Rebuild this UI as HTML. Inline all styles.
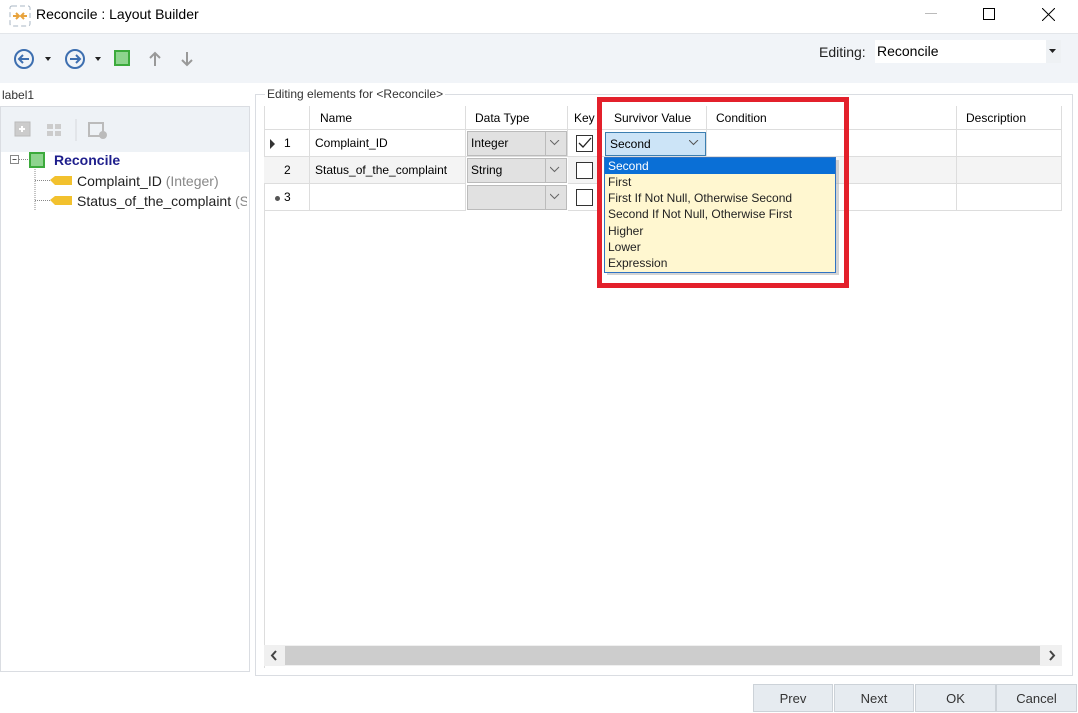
<!DOCTYPE html>
<html><head><meta charset="utf-8"><style>
*{box-sizing:border-box;margin:0;padding:0}
body{width:1078px;height:712px;overflow:hidden;background:#fff;font-family:"Liberation Sans",sans-serif;font-size:12px;color:#000;position:relative}
.a{position:absolute}
.t{white-space:nowrap}
.cell{position:absolute;border-right:1px solid #ddd;border-bottom:1px solid #ddd;padding-left:5px;line-height:26px;white-space:nowrap;overflow:hidden}
.btn{position:absolute;top:684px;height:28px;background:#e6ebf0;border:1px solid #ccd2d8;text-align:center;line-height:28px;font-size:13px;color:#333}
</style></head><body>
<!-- title -->
<svg class="a" style="left:9px;top:5px" width="22" height="22" viewBox="0 0 22 22"><rect x="1" y="1" width="20" height="20" rx="2" fill="none" stroke="#aab7c4" stroke-dasharray="5 3"/><path d="M4 11h5M7 8l3 3-3 3M18 11h-5M15 8l-3 3 3 3" stroke="#e8a33c" stroke-width="2" fill="none"/></svg>
<div class="a t" style="left:36px;top:6px;font-size:14px">Reconcile : Layout Builder</div>
<div class="a" style="left:925px;top:13px;width:12px;height:1px;background:#bbb"></div>
<div class="a" style="left:983px;top:8px;width:12px;height:12px;border:1px solid #000"></div>
<svg class="a" style="left:1042px;top:8px" width="13" height="13"><path d="M0 0L13 13M13 0L0 13" stroke="#000"/></svg>
<!-- toolbar -->
<div class="a" style="left:0;top:33px;width:1078px;height:50px;background:#f1f4f8;border-top:1px solid #e3e6ea"></div>
<svg class="a" style="left:13px;top:47px" width="200" height="24">
<circle cx="11" cy="12" r="9" fill="none" stroke="#3e6fb0" stroke-width="2"/><path d="M16 12H7M10 8l-4 4 4 4" stroke="#3e6fb0" stroke-width="2" fill="none"/>
<path d="M32 10h6l-3 4z" fill="#222"/>
<circle cx="62" cy="12" r="9" fill="none" stroke="#3e6fb0" stroke-width="2"/><path d="M57 12h9M63 8l4 4-4 4" stroke="#3e6fb0" stroke-width="2" fill="none"/>
<path d="M82 10h6l-3 4z" fill="#222"/>
<rect x="102" y="4" width="14" height="14" fill="#8ed48e" stroke="#3caa3c" stroke-width="2"/>
<path d="M142 19V6M137 11l5-5 5 5" stroke="#999" stroke-width="2" fill="none"/>
<path d="M174 5v13M169 13l5 5 5-5" stroke="#999" stroke-width="2" fill="none"/>
</svg>
<div class="a t" style="left:819px;top:44px;font-size:14px;color:#222">Editing:</div>
<div class="a t" style="left:875px;top:40px;width:186px;height:23px;background:#fff;font-size:14px;line-height:23px;padding-left:2px">Reconcile</div>
<div class="a" style="left:1046px;top:40px;width:15px;height:23px;background:#eef1f4"></div>
<svg class="a" style="left:1049px;top:49px" width="8" height="5"><path d="M0 0h7l-3.5 4z" fill="#222"/></svg>
<!-- left -->
<div class="a t" style="left:2px;top:88px;color:#333">label1</div>
<div class="a" style="left:0;top:106px;width:250px;height:566px;border:1px solid #dadde2;background:#fff"></div>
<div class="a" style="left:1px;top:107px;width:248px;height:45px;background:#eef2f6"></div>
<svg class="a" style="left:12px;top:118px" width="100" height="24">
<rect x="3" y="4" width="15" height="14" fill="#ccc" stroke="#bbb"/><path d="M10 8v6M7 11h6" stroke="#fff" stroke-width="2"/>
<rect x="35" y="6" width="6" height="5" fill="#ccc"/><rect x="43" y="6" width="6" height="5" fill="#ccc"/><rect x="35" y="13" width="6" height="5" fill="#ccc"/><rect x="43" y="13" width="6" height="5" fill="#ccc"/>
<path d="M64 1v22" stroke="#d5d8dc"/>
<rect x="77" y="5" width="14" height="13" fill="none" stroke="#bbb" stroke-width="2"/><circle cx="91" cy="17" r="4" fill="#bbb"/>
</svg>
<svg class="a" style="left:8px;top:152px" width="80" height="60">
<rect x="2.5" y="3.5" width="8" height="8" fill="#fff" stroke="#888"/><path d="M4.5 7.5h4" stroke="#555"/>
<path d="M11 7.5h9M27 15v43M27 28.5h15M27 48.5h15" stroke="#888" stroke-dasharray="1 1"/>
<rect x="22" y="1" width="14" height="14" fill="#8ed48e" stroke="#3caa3c" stroke-width="2"/>
<path d="M42 28l5-4h17v9H47z" fill="#f2c12e"/>
<path d="M42 48l5-4h17v9H47z" fill="#f2c12e"/>
</svg>
<div class="a t" style="left:54px;top:152px;font-weight:bold;color:#1e1e8c;font-size:14px">Reconcile</div>
<div class="a t" style="left:77px;top:173px;font-size:14px;color:#222">Complaint_ID <span style="color:#888">(Integer)</span></div>
<div class="a t" style="left:77px;top:193px;font-size:14px;color:#222;width:170px;overflow:hidden">Status_of_the_complaint <span style="color:#888">(String)</span></div>
<!-- group -->
<div class="a" style="left:255px;top:94px;width:818px;height:582px;border:1px solid #dadde2"></div>
<div class="a t" style="left:265px;top:87px;background:#fff;padding:0 2px;color:#333">Editing elements for &lt;Reconcile&gt;</div>
<div class="a" style="left:264px;top:106px;width:798px;height:562px;background:#fff;border-left:1px solid #ddd"></div>
<!-- header -->
<div class="cell" style="left:264px;top:106px;width:46px;height:24px;line-height:24px"></div>
<div class="cell" style="left:310px;top:106px;width:156px;height:24px;line-height:24px;padding-left:10px">Name</div>
<div class="cell" style="left:466px;top:106px;width:102px;height:24px;line-height:24px;padding-left:9px">Data Type</div>
<div class="cell" style="left:568px;top:106px;width:32px;height:24px;line-height:24px;padding-left:6px">Key</div>
<div class="cell" style="left:600px;top:106px;width:107px;height:24px;line-height:24px;padding-left:14px">Survivor Value</div>
<div class="cell" style="left:707px;top:106px;width:250px;height:24px;line-height:24px;padding-left:9px">Condition</div>
<div class="cell" style="left:957px;top:106px;width:105px;height:24px;line-height:24px;padding-left:9px">Description</div>
<!-- rows -->
<div class="cell" style="left:264px;top:130px;width:46px;height:27px;padding-left:20px">1</div>
<svg class="a" style="left:270px;top:139px" width="6" height="10"><path d="M0 0l5 5-5 5z" fill="#333"/></svg>
<div class="cell" style="left:310px;top:130px;width:156px;height:27px">Complaint_ID</div>
<div class="cell" style="left:466px;top:130px;width:102px;height:27px;background:#fff"></div>
<div class="cell" style="left:264px;top:157px;width:46px;height:27px;padding-left:20px;background:#f4f4f4">2</div>
<div class="cell" style="left:310px;top:157px;width:156px;height:27px;background:#f4f4f4">Status_of_the_complaint</div>
<div class="cell" style="left:264px;top:184px;width:46px;height:27px;padding-left:20px">3</div>
<div class="a" style="left:275px;top:196px;width:5px;height:5px;border-radius:50%;background:#555"></div>
<div class="cell" style="left:310px;top:184px;width:156px;height:27px"></div>
<div class="cell" style="left:568px;top:130px;width:32px;height:27px"></div>
<div class="cell" style="left:568px;top:157px;width:32px;height:27px;background:#f4f4f4"></div>
<div class="cell" style="left:568px;top:184px;width:32px;height:27px"></div>
<div class="cell" style="left:707px;top:130px;width:250px;height:27px"></div>
<div class="cell" style="left:707px;top:157px;width:250px;height:27px;background:#f4f4f4"></div>
<div class="cell" style="left:707px;top:184px;width:250px;height:27px"></div>
<div class="cell" style="left:957px;top:130px;width:105px;height:27px"></div>
<div class="cell" style="left:957px;top:157px;width:105px;height:27px;background:#f4f4f4"></div>
<div class="cell" style="left:957px;top:184px;width:105px;height:27px"></div>
<!-- datatype combos -->
<div class="a t" style="left:467px;top:131px;width:100px;height:25px;background:#e1e1e1;border:1px solid #bbb;line-height:23px;padding-left:3px">Integer</div>
<div class="a t" style="left:467px;top:158px;width:100px;height:25px;background:#e1e1e1;border:1px solid #bbb;line-height:23px;padding-left:3px">String</div>
<div class="a t" style="left:467px;top:185px;width:100px;height:25px;background:#e1e1e1;border:1px solid #bbb"></div>
<div class="a" style="left:545px;top:132px;width:1px;height:23px;background:#bbb"></div>
<div class="a" style="left:545px;top:159px;width:1px;height:23px;background:#bbb"></div>
<div class="a" style="left:545px;top:186px;width:1px;height:23px;background:#bbb"></div>
<svg class="a" style="left:550px;top:140px" width="200" height="60"><path d="M0 0l4.5 4.5L9 0M0 27l4.5 4.5L9 27M0 54l4.5 4.5L9 54" stroke="#666" fill="none"/>
<path d="M139 0l4.5 4.5L148 0" stroke="#555" fill="none"/></svg>
<!-- checkboxes -->
<div class="a" style="left:576px;top:135px;width:17px;height:17px;border:1px solid #333;background:#fff"></div>
<svg class="a" style="left:578px;top:137px" width="14" height="13"><path d="M1 6l4 4 8-9" stroke="#222" stroke-width="1.3" fill="none"/></svg>
<div class="a" style="left:576px;top:162px;width:17px;height:17px;border:1px solid #333;background:#fff"></div>
<div class="a" style="left:576px;top:189px;width:17px;height:17px;border:1px solid #333;background:#fff"></div>
<!-- survivor -->
<div class="cell" style="left:600px;top:130px;width:107px;height:27px"></div>
<div class="a t" style="left:605px;top:132px;width:101px;height:24px;background:#cce4f7;border:1px solid #3c7fb1;line-height:22px;padding-left:4px">Second</div>
<svg class="a" style="left:689px;top:140px" width="10" height="6"><path d="M0 0l4.5 4.5L9 0" stroke="#555" fill="none"/></svg>
<!-- dropdown -->
<div class="a" style="left:607px;top:160px;width:232px;height:115px;background:#aaa;opacity:.5"></div>
<div class="a" style="left:604px;top:157px;width:232px;height:116px;background:#fff7d0;border:1px solid #2f73c4;line-height:16.2px;font-size:12px;color:#222">
<div style="background:#0a6fd6;color:#fff;padding-left:3px;height:16px">Second</div>
<div style="padding-left:3px">First</div>
<div style="padding-left:3px">First If Not Null, Otherwise Second</div>
<div style="padding-left:3px">Second If Not Null, Otherwise First</div>
<div style="padding-left:3px">Higher</div>
<div style="padding-left:3px">Lower</div>
<div style="padding-left:3px">Expression</div>
</div>
<!-- red box -->
<div class="a" style="left:597px;top:97px;width:252px;height:191px;border:5px solid #e3202b"></div>
<!-- scrollbar -->
<div class="a" style="left:264px;top:645px;width:798px;height:21px;background:#f0f0f0"></div>
<div class="a" style="left:285px;top:646px;width:755px;height:19px;background:#cdcdcd"></div>
<svg class="a" style="left:270px;top:650px" width="790" height="12"><path d="M6 1L2 5.5 6 10" stroke="#444" stroke-width="2" fill="none"/><path d="M780 1l4 4.5-4 4.5" stroke="#444" stroke-width="2" fill="none"/></svg>
<!-- buttons -->
<div class="btn" style="left:753px;width:80px">Prev</div>
<div class="btn" style="left:834px;width:80px">Next</div>
<div class="btn" style="left:915px;width:81px">OK</div>
<div class="btn" style="left:996px;width:81px">Cancel</div>
</body></html>
